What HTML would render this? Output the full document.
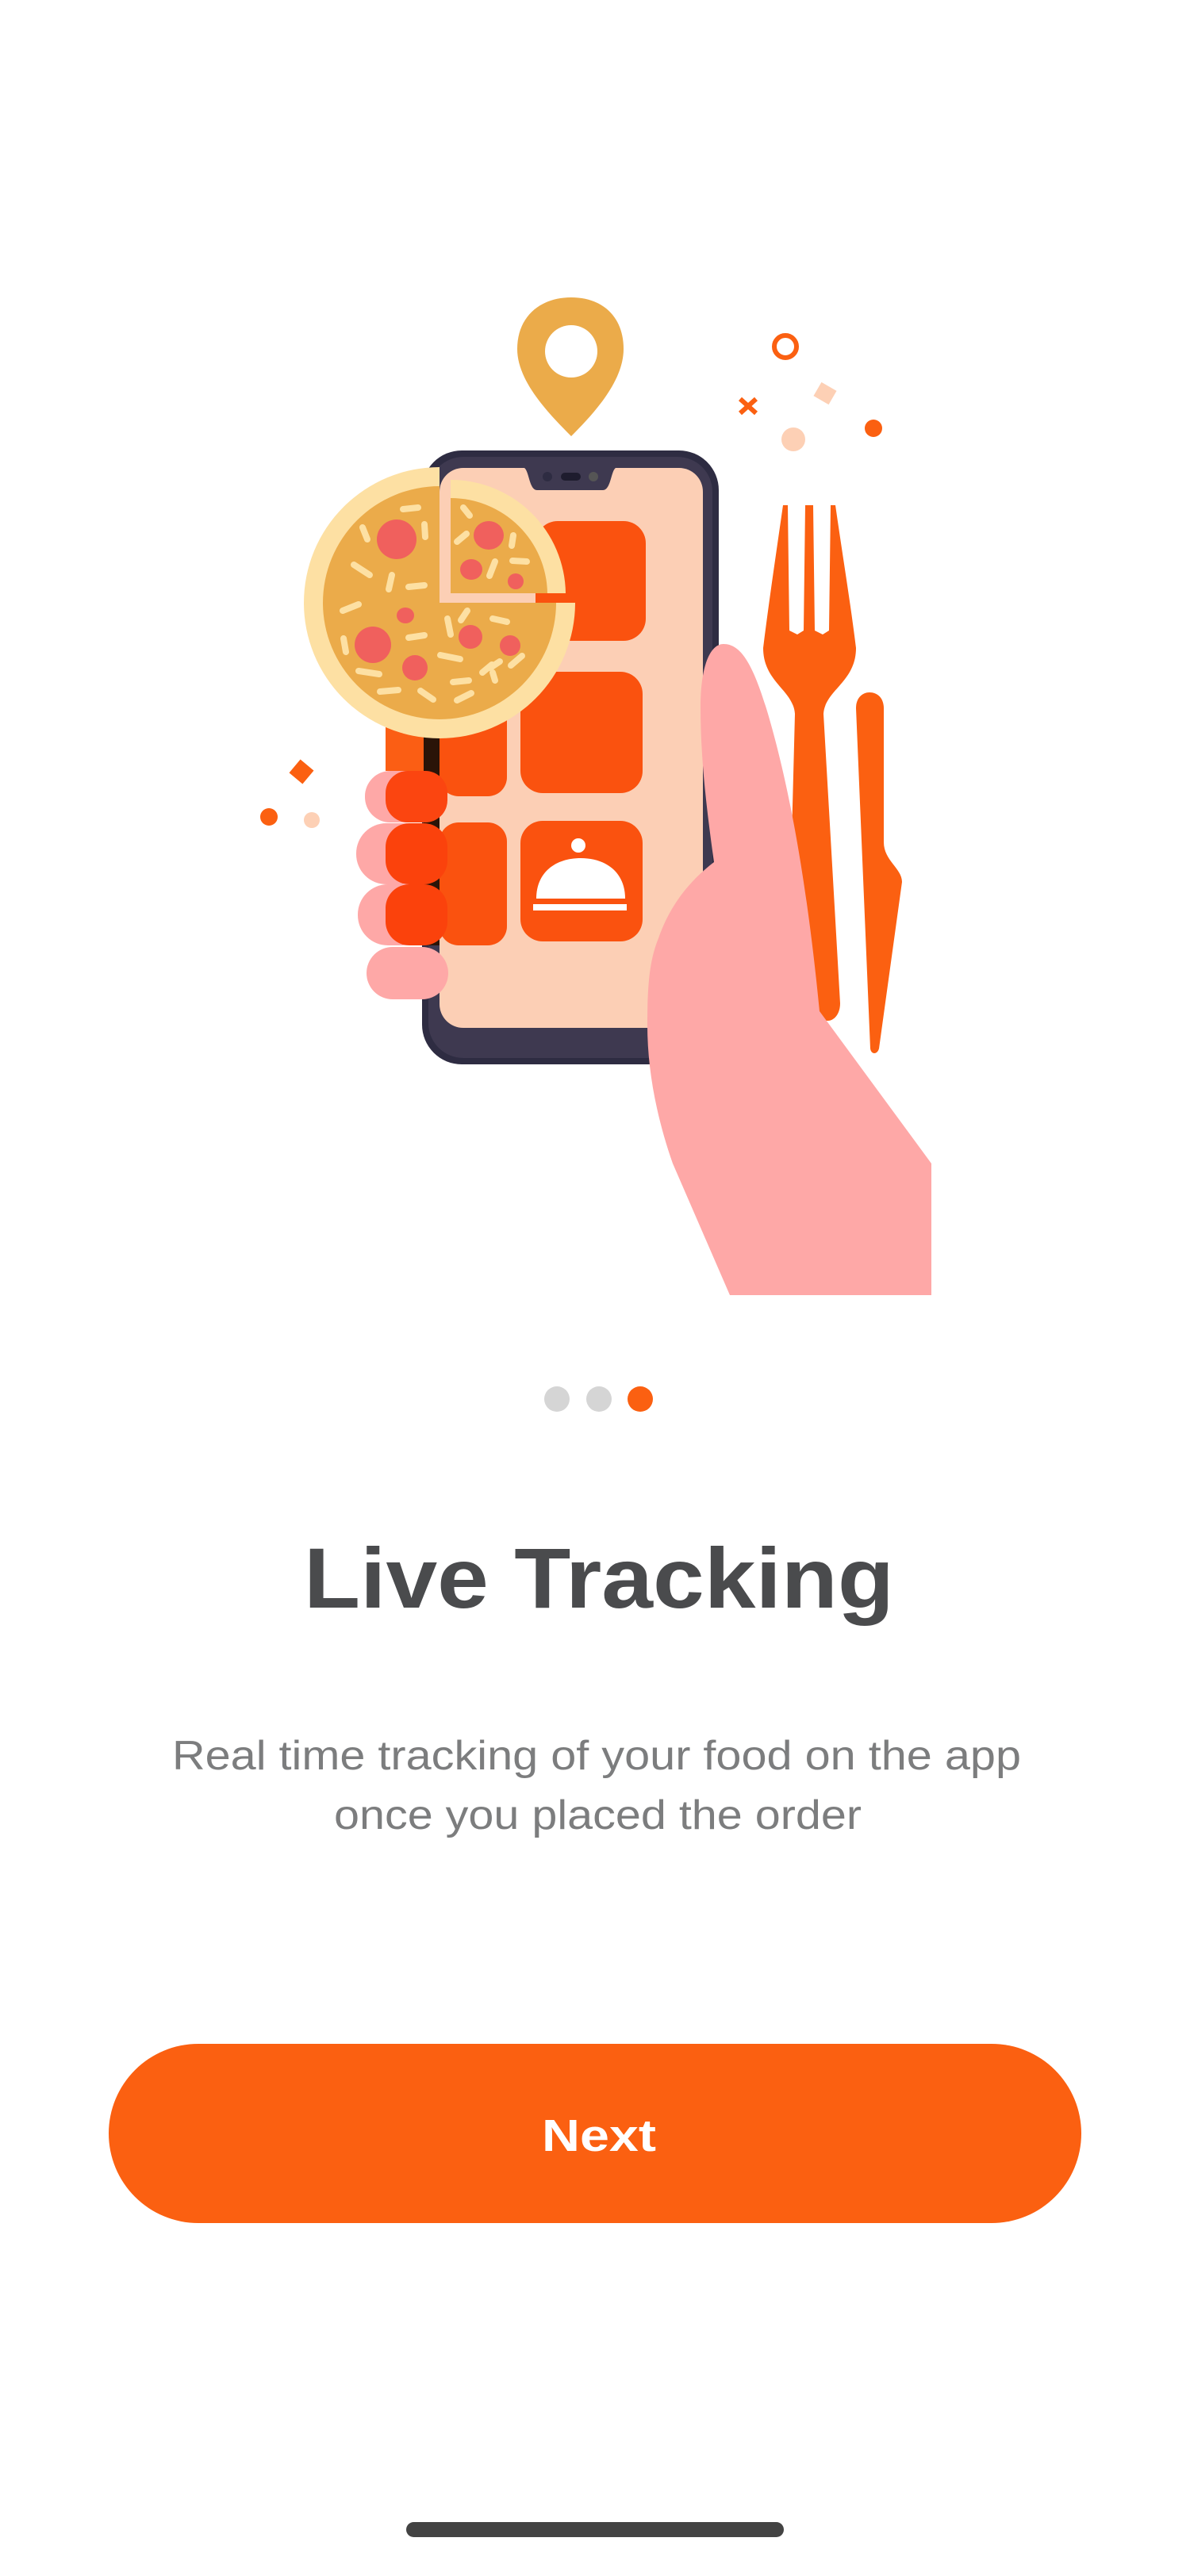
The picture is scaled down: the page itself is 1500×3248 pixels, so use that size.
<!DOCTYPE html>
<html><head><meta charset="utf-8"><style>
html,body{margin:0;padding:0;background:#fff;}
body{width:1500px;height:3248px;overflow:hidden;position:relative;}
svg{position:absolute;left:0;top:0;}
</style></head><body>
<svg width="1500" height="3248" viewBox="0 0 1500 3248" xmlns="http://www.w3.org/2000/svg">
<!-- decor -->
<circle cx="990" cy="437" r="14" fill="none" stroke="#fb6011" stroke-width="6"/>
<g stroke="#fb6011" stroke-width="6"><line x1="933" y1="503" x2="953" y2="521"/><line x1="953" y1="503" x2="933" y2="521"/></g>
<rect x="1029" y="486" width="22" height="20" fill="#fdd0b5" transform="rotate(30 1040 496)"/>
<circle cx="1000" cy="554" r="15" fill="#fdd0b5"/>
<circle cx="1101" cy="540" r="11" fill="#fb6011"/>
<rect x="369" y="962" width="22" height="22" fill="#fb6011" transform="rotate(40 380 973)"/>
<circle cx="339" cy="1030" r="11" fill="#fb6011"/>
<circle cx="393" cy="1034" r="10" fill="#fdd0b5"/>
<!-- pin -->
<path d="M720 375 C680 375 652 400 652 440 C652 480 690 520 720 550 C750 520 786 480 786 440 C786 400 760 375 720 375 Z" fill="#ebab4a"/>
<circle cx="720" cy="443" r="33" fill="#fff"/>
<!-- phone -->
<rect x="532" y="568" width="374" height="774" rx="50" fill="#2e2c42"/>
<rect x="540" y="576" width="358" height="758" rx="44" fill="#3e3950"/>
<rect x="554" y="590" width="332" height="706" rx="30" fill="#fccfb5"/>
<path d="M661 590 H776 C770 594 770 618 760 618 H677 C667 618 667 594 661 590 Z" fill="#3e3950"/>
<circle cx="690" cy="601" r="6" fill="#2e2c42"/><rect x="707" y="596" width="25" height="10" rx="5" fill="#1e1c2e"/><circle cx="748" cy="601" r="6" fill="#555"/>
<rect x="534" y="917" width="20" height="275" fill="#2a1408"/>
<!-- tiles -->
<rect x="675" y="657" width="139" height="151" rx="28" fill="#fa520f"/>
<rect x="656" y="847" width="154" height="153" rx="28" fill="#fa520f"/>
<rect x="656" y="1035" width="154" height="152" rx="28" fill="#fa520f"/>
<rect x="554" y="760" width="85" height="244" rx="24" fill="#fa520f"/>
<rect x="554" y="1037" width="85" height="155" rx="24" fill="#fa520f"/>
<!-- cloche -->
<circle cx="729" cy="1066" r="9" fill="#fff"/>
<path d="M676 1133 C676 1100 700 1082 732 1082 C764 1082 788 1100 788 1133 Z" fill="#fff"/>
<rect x="672" y="1140" width="118" height="8" fill="#fff"/>
<!-- left hand fingers -->
<g fill="#fea8a7">
<rect x="460" y="972" width="104" height="65" rx="32"/>
<rect x="449" y="1038" width="115" height="77" rx="38"/>
<rect x="451" y="1115" width="113" height="77" rx="38"/>
<rect x="462" y="1194" width="103" height="66" rx="33"/>
</g>
<rect x="486" y="917" width="48" height="55" fill="#fb5e14"/>
<rect x="486" y="972" width="78" height="65" rx="28" fill="#fb4510"/>
<rect x="486" y="1038" width="78" height="77" rx="30" fill="#fb420c"/>
<rect x="486" y="1115" width="78" height="77" rx="30" fill="#fb420c"/>
<!-- pizza -->
<path d="M554 760 L554 589 A171 171 0 1 0 725 760 Z" fill="#fde0a3"/>
<path d="M554 760 L554 613 A147 147 0 1 0 701 760 Z" fill="#ebab4a"/>
<path d="M568 748 L568 605 A145 145 0 0 1 713 748 Z" fill="#fde0a3"/>
<path d="M568 748 L568 628 A122 122 0 0 1 690 748 Z" fill="#ebab4a"/>
<g fill="#f0605d">
<ellipse cx="500" cy="680" rx="25" ry="25"/><ellipse cx="470" cy="813" rx="23" ry="23"/>
<ellipse cx="523" cy="842" rx="16" ry="16"/><ellipse cx="511" cy="776" rx="11" ry="10"/>
<ellipse cx="593" cy="803" rx="15" ry="15"/><ellipse cx="643" cy="814" rx="13" ry="13"/>
<ellipse cx="616" cy="675" rx="19" ry="18"/><ellipse cx="594" cy="718" rx="14" ry="13"/>
<ellipse cx="650" cy="733" rx="10" ry="10"/>
</g>
<g stroke="#fde0a3" stroke-width="8" stroke-linecap="round">
<line x1="508" y1="642" x2="527" y2="640"/><line x1="457" y1="665" x2="463" y2="680"/><line x1="535" y1="661" x2="536" y2="677"/>
<line x1="446" y1="712" x2="466" y2="725"/><line x1="494" y1="725" x2="490" y2="743"/><line x1="515" y1="740" x2="535" y2="738"/>
<line x1="432" y1="770" x2="452" y2="762"/><line x1="433" y1="805" x2="436" y2="822"/><line x1="564" y1="780" x2="568" y2="800"/>
<line x1="515" y1="804" x2="535" y2="801"/><line x1="581" y1="782" x2="589" y2="770"/><line x1="621" y1="780" x2="639" y2="784"/>
<line x1="452" y1="846" x2="478" y2="850"/><line x1="555" y1="826" x2="580" y2="831"/><line x1="618" y1="842" x2="630" y2="834"/>
<line x1="479" y1="872" x2="502" y2="870"/><line x1="530" y1="871" x2="546" y2="882"/><line x1="571" y1="860" x2="591" y2="858"/>
<line x1="576" y1="883" x2="594" y2="874"/><line x1="620" y1="838" x2="608" y2="848"/><line x1="658" y1="827" x2="644" y2="839"/>
<line x1="621" y1="848" x2="624" y2="858"/><line x1="584" y1="640" x2="592" y2="650"/><line x1="576" y1="683" x2="588" y2="673"/>
<line x1="647" y1="675" x2="645" y2="688"/><line x1="624" y1="708" x2="617" y2="726"/><line x1="646" y1="707" x2="664" y2="708"/>
</g>
<!-- fork -->
<path d="M987 637 L993 637 L995 795 L1005 800 L1013 795 L1015 637 L1025 637 L1027 795 L1037 800 L1045 795 L1047 637 L1053 637 C1062 700 1072 760 1079 817 C1079 860 1040 870 1038 900 L1059 1265 C1059 1280 1050 1287 1044 1287 L992 1287 L1002 900 C1000 870 962 860 962 817 C969 760 978 700 987 637 Z" fill="#fb6011"/>
<!-- knife -->
<path d="M1079 893 C1079 880 1087 873 1096 873 C1106 873 1114 880 1114 893 L1114 1062 C1114 1085 1137 1095 1137 1112 L1108 1322 C1106 1330 1098 1330 1097 1322 Z" fill="#fb6011"/>
<!-- right hand -->
<path d="M912 812 C935 812 950 840 968 900 C990 975 1015 1090 1033 1275 L1174 1467 L1174 1633 L920 1633 L848 1467 C828 1410 816 1350 816 1292 C816 1240 819 1210 830 1183 C845 1140 870 1110 900 1087 C892 1030 883 960 883 892 C883 840 895 812 912 812 Z" fill="#fea8a7"/>
<!-- dots -->
<circle cx="702" cy="1764" r="16" fill="#d5d5d5"/>
<circle cx="755" cy="1764" r="16" fill="#d5d5d5"/>
<circle cx="807" cy="1764" r="16" fill="#fb6011"/>
<!-- title -->
<text x="383" y="2027" textLength="744" lengthAdjust="spacingAndGlyphs" font-family="Liberation Sans, sans-serif" font-weight="bold" font-size="108" fill="#4a4b4d">Live Tracking</text>
<text x="217" y="2231" textLength="1070" lengthAdjust="spacingAndGlyphs" font-family="Liberation Sans, sans-serif" font-size="52" fill="#7c7d7e">Real time tracking of your food on the app</text>
<text x="421" y="2306" textLength="665" lengthAdjust="spacingAndGlyphs" font-family="Liberation Sans, sans-serif" font-size="52" fill="#7c7d7e">once you placed the order</text>
<!-- button -->
<rect x="137" y="2577" width="1226" height="226" rx="113" fill="#fb6011"/>
<text x="683" y="2712" textLength="144" lengthAdjust="spacingAndGlyphs" font-family="Liberation Sans, sans-serif" font-weight="bold" font-size="57" fill="#fff">Next</text>
<!-- home indicator -->
<rect x="512" y="3180" width="476" height="19" rx="9.5" fill="#434343"/>
</svg>
</body></html>
